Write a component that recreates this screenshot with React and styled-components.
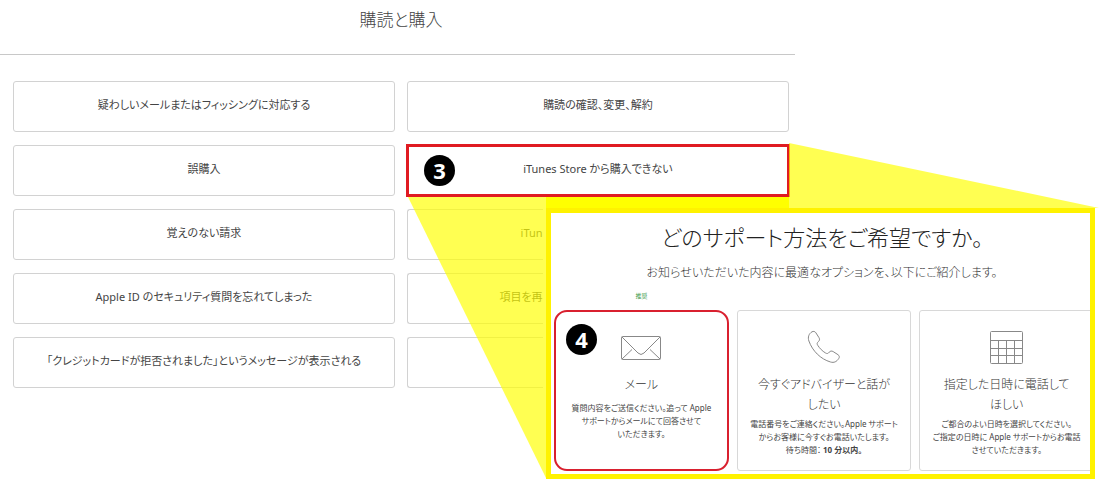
import React from "react";
import styled, { createGlobalStyle } from "styled-components";

const GlobalStyle = createGlobalStyle`
body {
    margin: 0;
    background: #fff;
    color: #444;
    font-family: "Noto Sans", "Noto Sans CJK JP", sans-serif;
    font-feature-settings: "palt";
}

button {
    font: inherit;
    font-feature-settings: inherit;
    color: inherit;
    cursor: pointer;
}
`;

const Stage = styled.div`
position: relative;
display: grid;

& > * {
    grid-area: 1 / 1;
}
`;

const Topics = styled.section`
width: 72.2%;
`;

const TopicsTitle = styled.h1`
box-sizing: border-box;
height: 55px;
margin: 0;
padding: 6px 6px 0 13px;
border-bottom: 1px solid #c8c8c8;
color: #444;
font-size: 17px;
font-weight: 300;
line-height: 28px;
text-align: center;
`;

const TopicGrid = styled.div`
display: grid;
grid-template-columns: 1fr 1fr;
gap: 13px 12px;
padding: 26px 6px 0 13px;
`;

const Topic = styled.button`
position: relative;
display: flex;
align-items: center;
justify-content: ${props => props.$cut ? "flex-end" : "center"};
width: ${props => props.$cut ? "35.5%" : "100%"};
height: 51px;
padding: 0 0 3px;
box-sizing: border-box;
background: #fff;
border: 1px solid #d2d2d2;
border-right-width: ${props => props.$cut ? "0" : "1px"};
border-radius: ${props => props.$cut ? "3px 0 0 3px" : "3px"};
font-size: 11px;
line-height: 18px;
white-space: nowrap;

${props => props.$picked && `
border-radius: 0;
outline: 3px solid #e01b22;
outline-offset: -2px;
`}
`;

const Step = styled.span`
position: absolute;
top: ${props => props.$top};
left: ${props => props.$left};
width: 31px;
height: 31px;
border-radius: 50%;
background: #000;
color: #fff;
font-size: 22px;
font-weight: 700;
line-height: 30px;
text-align: center;
`;

const Beam = styled.svg`
position: absolute;
inset: 0;
width: 100%;
height: 100%;
pointer-events: none;
`;

const Panel = styled.section`
position: relative;
box-sizing: border-box;
height: 271px;
margin: 208px 6px 9px 49.6%;
padding-left: 3px;
border: 5px solid #fff200;
background: #fff;
overflow: hidden;
text-align: center;
`;

const PanelTitle = styled.h2`
margin: 6px 0 0;
color: #222;
font-size: 22px;
font-weight: 300;
line-height: 36px;
`;

const PanelLead = styled.p`
margin: 8px 0 0;
color: #333;
font-size: 12px;
font-weight: 300;
line-height: 20px;
`;

const OptionGrid = styled.div`
display: grid;
grid-template-columns: repeat(3, 1fr);
column-gap: 8px;
margin-right: -4px;
`;

const Recommended = styled.p`
margin: 0;
height: 27px;
color: #3f9c4c;
font-size: 6px;
line-height: 26px;
`;

const Option = styled.button`
position: relative;
display: flex;
flex-direction: column;
align-items: center;
justify-content: flex-start;
grid-row: 2;
height: 161px;
padding: 19px 0 0;
background: #fff;
border: 1px solid #d8d8d8;
border-radius: 3px;
white-space: nowrap;

${props => props.$picked && `
padding: 18px 0 0;
border: 2px solid #d9202f;
border-radius: 13px;
`}
`;

const OptionIcon = styled.svg`
width: 42px;
height: 35px;
fill: none;
stroke: #888;
`;

const OptionTitle = styled.span`
min-height: 24px;
margin-top: 10px;
color: #333;
font-size: 12px;
font-weight: 300;
line-height: 20px;
`;

const OptionText = styled.span`
margin-top: 2px;
font-size: 8px;
line-height: 13px;
`;

function MailIcon() {
    return <OptionIcon viewBox="0 0 42 35">
        <rect x="1.5" y="6.5" width="39" height="23" rx="1"/>
        <path d="M2 7l16 16q3 3 6 0L40 7M2 29l10-9.500M40 29l-10-9.500"/>
    </OptionIcon>;
}

function PhoneIcon() {
    return <OptionIcon viewBox="0 0 42 35">
        <path d="M9 1.800C10.500 1 12 1.400 12.900 2.800L16 7.700c.9 1.500.6 2.800-.6 3.900-1.500 1.300-1.600 2.200-.6 3.800 2 3.100 4.500 5.600 7.600 7.500 1.600 1 2.600.8 3.800-.7 1.100-1.300 2.500-1.500 4-.6l4.800 3.100c1.500 1 1.700 2.500.7 3.900-2 3-4.600 4.500-8.200 3.400C17.500 29 9.500 21 5.900 11 4.600 7.200 5.800 3.700 9 1.800z"/>
    </OptionIcon>;
}

function CalendarIcon() {
    return <OptionIcon viewBox="0 0 42 35">
        <rect x="4.500" y="1.500" width="32" height="32" rx="1"/>
        <path d="M4.500 10.500h32M4.500 18.500h32M4.500 25.500h32M12.500 10.500v23M20.500 10.500v23M28.500 10.500v23"/>
    </OptionIcon>;
}

function App() {
    return <>
        <GlobalStyle/>
        <Stage>
            <Topics>
                <TopicsTitle>購読と購入</TopicsTitle>
                <TopicGrid>
                    <Topic>疑わしいメールまたはフィッシングに対応する</Topic>
                    <Topic>購読の確認、変更、解約</Topic>
                    <Topic>誤購入</Topic>
                    <Topic $picked>
                        <Step $top="9px" $left="16px">3</Step>
                        iTunes Store から購入できない
                    </Topic>
                    <Topic>覚えのない請求</Topic>
                    <Topic $cut>iTun</Topic>
                    <Topic>Apple ID のセキュリティ質問を忘れてしまった</Topic>
                    <Topic $cut>項目を再</Topic>
                    <Topic>「クレジットカードが拒否されました」というメッセージが表示される</Topic>
                    <Topic $cut/>
                </TopicGrid>
            </Topics>
            <Beam viewBox="0 0 1101 488" preserveAspectRatio="none">
                <path d="M408 197H546V478z" fill="#ff0" fillOpacity="0.68"/>
                <path d="M789 143L1099 208H789z" fill="#ff0" fillOpacity="0.68"/>
                <path d="M546 197H789V208H546z" fill="#ff0"/>
            </Beam>
            <Panel>
                <PanelTitle>どのサポート方法をご希望ですか。</PanelTitle>
                <PanelLead>お知らせいただいた内容に最適なオプションを、以下にご紹介します。</PanelLead>
                <OptionGrid>
                    <Recommended>推奨</Recommended>
                    <Option $picked>
                        <Step $top="12px" $left="10px">4</Step>
                        <MailIcon/>
                        <OptionTitle>メール</OptionTitle>
                        <OptionText>
                            質問内容をご送信ください。追って Apple<br/>
                            サポートからメールにて回答させて<br/>
                            いただきます。
                        </OptionText>
                    </Option>
                    <Option>
                        <PhoneIcon/>
                        <OptionTitle>今すぐアドバイザーと話が<br/>したい</OptionTitle>
                        <OptionText>
                            電話番号をご連絡ください。Apple サポート<br/>
                            からお客様に今すぐお電話いたします。<br/>
                            待ち時間： <b>10 分以内。</b>
                        </OptionText>
                    </Option>
                    <Option>
                        <CalendarIcon/>
                        <OptionTitle>指定した日時に電話して<br/>ほしい</OptionTitle>
                        <OptionText>
                            ご都合のよい日時を選択してください。<br/>
                            ご指定の日時に Apple サポートからお電話<br/>
                            させていただきます。
                        </OptionText>
                    </Option>
                </OptionGrid>
            </Panel>
        </Stage>
    </>;
}

export default App;
